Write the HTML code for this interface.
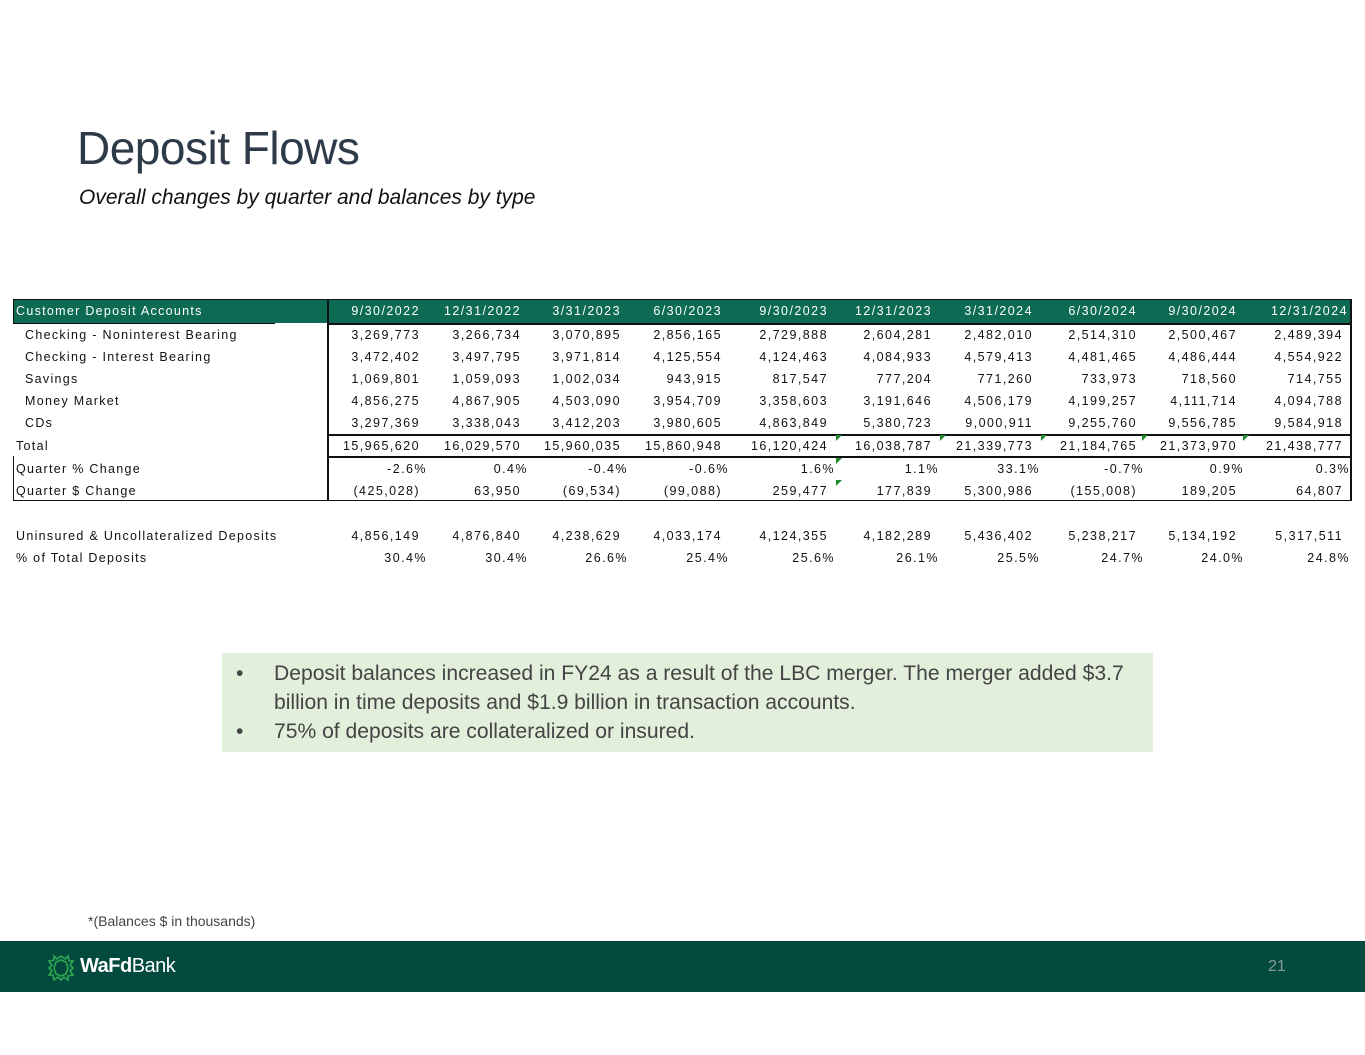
<!DOCTYPE html>
<html><head><meta charset="utf-8"><style>
*{margin:0;padding:0;box-sizing:border-box}
body{width:1365px;height:1055px;position:relative;background:#fff;font-family:"Liberation Sans",sans-serif;overflow:hidden}
.t{position:absolute;left:77px;top:121px;font-size:46px;color:#2e3a48;letter-spacing:-0.5px}
.s{position:absolute;left:79px;top:186px;font-size:21px;font-style:italic;color:#111}
.row{position:absolute;left:13px;height:22px;display:flex;font-size:12.5px;letter-spacing:1.45px;color:#111;line-height:22px;white-space:nowrap}
.row div{text-align:right;padding-right:8px}
.row div:first-child{text-align:left;width:315px;padding-left:3px;letter-spacing:1.3px}
.hd{background:#0d6b54;color:#fff;height:23px;line-height:23px}
.p div{padding-right:1px}
.w1{width:100px}.w2{width:101px}.w3{width:100px}.w4{width:101px}.w5{width:106px}.w6{width:104px}.w7{width:101px}.w8{width:104px}.w9{width:100px}.w10{width:106px}
.ln{position:absolute;background:#111}
.box{position:absolute;left:222px;top:653px;width:931px;height:99px;background:#e2efda;color:#444;font-size:21.1px}
.box p{position:absolute;left:52px;white-space:nowrap}
.box b{position:absolute;left:-38px;font-weight:normal}
.tri{position:absolute;width:0;height:0;border-top:6px solid #1f8a2a;border-right:6px solid transparent}
</style></head><body>
<div class="t">Deposit Flows</div>
<div class="s">Overall changes by quarter and balances by type</div>

<div class="row hd" style="top:300px;width:1338px"><div>Customer Deposit Accounts</div><div class="w1">9/30/2022</div><div class="w2">12/31/2022</div><div class="w3">3/31/2023</div><div class="w4">6/30/2023</div><div class="w5">9/30/2023</div><div class="w6">12/31/2023</div><div class="w7">3/31/2024</div><div class="w8">6/30/2024</div><div class="w9">9/30/2024</div><div class="w10" style="padding-right:3px">12/31/2024</div></div>
<div class="row" style="top:324px"><div style="padding-left:12px">Checking - Noninterest Bearing</div><div class="w1">3,269,773</div><div class="w2">3,266,734</div><div class="w3">3,070,895</div><div class="w4">2,856,165</div><div class="w5">2,729,888</div><div class="w6">2,604,281</div><div class="w7">2,482,010</div><div class="w8">2,514,310</div><div class="w9">2,500,467</div><div class="w10">2,489,394</div></div>
<div class="row" style="top:346px"><div style="padding-left:12px">Checking - Interest Bearing</div><div class="w1">3,472,402</div><div class="w2">3,497,795</div><div class="w3">3,971,814</div><div class="w4">4,125,554</div><div class="w5">4,124,463</div><div class="w6">4,084,933</div><div class="w7">4,579,413</div><div class="w8">4,481,465</div><div class="w9">4,486,444</div><div class="w10">4,554,922</div></div>
<div class="row" style="top:368px"><div style="padding-left:12px">Savings</div><div class="w1">1,069,801</div><div class="w2">1,059,093</div><div class="w3">1,002,034</div><div class="w4">943,915</div><div class="w5">817,547</div><div class="w6">777,204</div><div class="w7">771,260</div><div class="w8">733,973</div><div class="w9">718,560</div><div class="w10">714,755</div></div>
<div class="row" style="top:390px"><div style="padding-left:12px">Money Market</div><div class="w1">4,856,275</div><div class="w2">4,867,905</div><div class="w3">4,503,090</div><div class="w4">3,954,709</div><div class="w5">3,358,603</div><div class="w6">3,191,646</div><div class="w7">4,506,179</div><div class="w8">4,199,257</div><div class="w9">4,111,714</div><div class="w10">4,094,788</div></div>
<div class="row" style="top:412px"><div style="padding-left:12px">CDs</div><div class="w1">3,297,369</div><div class="w2">3,338,043</div><div class="w3">3,412,203</div><div class="w4">3,980,605</div><div class="w5">4,863,849</div><div class="w6">5,380,723</div><div class="w7">9,000,911</div><div class="w8">9,255,760</div><div class="w9">9,556,785</div><div class="w10">9,584,918</div></div>
<div class="row" style="top:435px"><div>Total</div><div class="w1">15,965,620</div><div class="w2">16,029,570</div><div class="w3">15,960,035</div><div class="w4">15,860,948</div><div class="w5">16,120,424</div><div class="w6">16,038,787</div><div class="w7">21,339,773</div><div class="w8">21,184,765</div><div class="w9">21,373,970</div><div class="w10">21,438,777</div></div>
<div class="row p" style="top:458px"><div>Quarter % Change</div><div class="w1">-2.6%</div><div class="w2">0.4%</div><div class="w3">-0.4%</div><div class="w4">-0.6%</div><div class="w5">1.6%</div><div class="w6">1.1%</div><div class="w7">33.1%</div><div class="w8">-0.7%</div><div class="w9">0.9%</div><div class="w10">0.3%</div></div>
<div class="row" style="top:480px"><div>Quarter $ Change</div><div class="w1">(425,028)</div><div class="w2">63,950</div><div class="w3">(69,534)</div><div class="w4">(99,088)</div><div class="w5">259,477</div><div class="w6">177,839</div><div class="w7">5,300,986</div><div class="w8">(155,008)</div><div class="w9">189,205</div><div class="w10">64,807</div></div>
<div class="row" style="top:525px"><div>Uninsured &amp; Uncollateralized Deposits</div><div class="w1">4,856,149</div><div class="w2">4,876,840</div><div class="w3">4,238,629</div><div class="w4">4,033,174</div><div class="w5">4,124,355</div><div class="w6">4,182,289</div><div class="w7">5,436,402</div><div class="w8">5,238,217</div><div class="w9">5,134,192</div><div class="w10">5,317,511</div></div>
<div class="row p" style="top:547px"><div>% of Total Deposits</div><div class="w1">30.4%</div><div class="w2">30.4%</div><div class="w3">26.6%</div><div class="w4">25.4%</div><div class="w5">25.6%</div><div class="w6">26.1%</div><div class="w7">25.5%</div><div class="w8">24.7%</div><div class="w9">24.0%</div><div class="w10">24.8%</div></div>

<div class="ln" style="left:13px;top:299px;width:1339px;height:1px"></div>
<div class="ln" style="left:13px;top:323px;width:262px;height:1px"></div>
<div class="ln" style="left:328px;top:323px;width:1024px;height:2px"></div>
<div class="ln" style="left:328px;top:434px;width:1024px;height:2px"></div>
<div class="ln" style="left:328px;top:456px;width:1024px;height:2px"></div>
<div class="ln" style="left:13px;top:456px;width:1px;height:45px"></div>
<div class="ln" style="left:13px;top:300px;width:1px;height:23px"></div>
<div class="ln" style="left:13px;top:500px;width:1339px;height:1px"></div>
<div class="ln" style="left:327px;top:300px;width:2px;height:201px"></div>
<div class="ln" style="left:1350px;top:300px;width:2px;height:201px"></div>

<div class="tri" style="left:836px;top:435px"></div>
<div class="tri" style="left:940px;top:435px"></div>
<div class="tri" style="left:1041px;top:435px"></div>
<div class="tri" style="left:1142px;top:435px"></div>
<div class="tri" style="left:1243px;top:435px"></div>
<div class="tri" style="left:836px;top:458px"></div>
<div class="tri" style="left:836px;top:480px"></div>

<div class="box">
<p style="top:9px"><b>•</b>Deposit balances increased in FY24 as a result of the LBC merger. The merger added $3.7</p>
<p style="top:38px">billion in time deposits and $1.9 billion in transaction accounts.</p>
<p style="top:67px"><b>•</b>75% of deposits are collateralized or insured.</p>
</div>

<div style="position:absolute;left:88px;top:913px;font-size:14px;color:#444">*(Balances $ in thousands)</div>
<div style="position:absolute;left:0;top:941px;width:1365px;height:51px;background:#034a3e"></div>
<svg style="position:absolute;left:46px;top:953px" width="30" height="30" viewBox="0 0 30 30" fill="none" stroke="#2fa84f" stroke-width="1.6">
<path d="M8 3 L11 6 L15 3 L19 6 L22 3 L23 8 L27 8 L24 12 L27 15 L24 18 L27 22 L22 23 L22 27 L18 24 L15 27 L12 24 L8 27 L7 22 L3 22 L6 18 L3 15 L6 12 L3 8 L8 7 Z"/>
<path d="M10 9 L15 7 L20 9 L22 15 L20 21 L15 23 L10 21 L8 15 Z"/>
</svg>
<div style="position:absolute;left:80px;top:955px;font-size:20px;color:#fff;letter-spacing:-0.5px"><b>WaFd</b>Bank</div>
<div style="position:absolute;left:1268px;top:958px;font-size:16px;color:#8a9a96">21</div>
</body></html>
